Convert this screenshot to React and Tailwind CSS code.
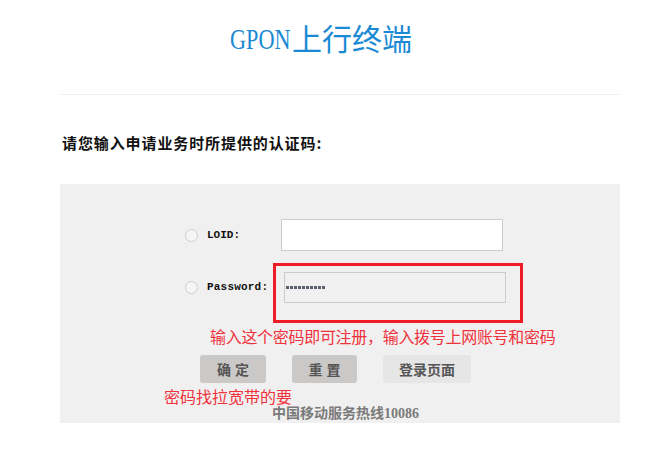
import React from "react";

const cjk = { fontFamily: '"Noto Sans CJK SC", "Noto Sans", sans-serif' };
const serifCjk = { fontFamily: '"Liberation Serif", "Noto Sans CJK SC", serif' };
const mono = { fontFamily: '"Liberation Mono", "Noto Sans CJK SC", monospace' };

function Radio() {
  return <div className="w-[13px] h-[13px] rounded-full border border-[#cfcfcf] bg-[#f5f5f5] shrink-0" />;
}

export default function App() {
  return (
    <div className="w-[672px] h-[449px] bg-white overflow-hidden">
      <div className="ml-[60px] w-[560px]">
        <div className="pt-[19px] pl-[170px] h-[55px] flex items-center text-[#1b8ad4] text-[30px] leading-[36px]" style={cjk}>
          <span className="inline-block w-[62px] overflow-visible">
            <span className="inline-block origin-left scale-x-[0.74] whitespace-nowrap" style={{ fontFamily: '"Liberation Serif", serif' }}>GPON</span>
          </span>
          <span>上行终端</span>
        </div>
        <div className="mt-[39px] h-px bg-[#efefef]" />
        <div className="mt-[38px] pl-[2px] text-[15px] leading-[20px] font-bold text-[#111] tracking-[0.9px]" style={cjk}>
          请您输入申请业务时所提供的认证码:
        </div>
        <div className="mt-[31px] h-[239px] bg-[#f0f0f0] pt-[35px]">
          <div className="flex items-center h-[32px] pl-[125px]">
            <Radio />
            <div className="ml-[9px] w-[74px] text-[11px] font-bold text-[#111]" style={mono}>LOID:</div>
            <div className="w-[222px] h-[32px] border border-[#cccccc] bg-white" />
          </div>
          <div className="mt-[12px] flex items-start pl-[125px]">
            <div className="mt-[9px] h-[31px] flex items-center">
              <Radio />
              <div className="ml-[9px] w-[66px] text-[11px] font-bold text-[#111] tracking-[0.2px]" style={mono}>Password:</div>
            </div>
            <div className="w-[250px] h-[60px] border-[3px] border-[#ee1c25] pt-[6px] pl-[8px]">
              <div className="w-[222px] h-[31px] border border-[#cccccc] bg-[#f0f0f0] flex items-center pl-[1px] gap-[1px]">
                {Array.from({ length: 10 }).map((_, i) => (
                  <div key={i} className="w-[3px] h-[3px] bg-[#5a6070]" />
                ))}
              </div>
            </div>
          </div>
          <div className="mt-[3px] pl-[150px] text-[16px] leading-[20px] text-[#f0323c] tracking-[-0.3px]" style={cjk}>
            输入这个密码即可注册，输入拨号上网账号和密码
          </div>
          <div className="mt-[9px] pl-[140px] flex gap-[26px]">
            <div className="w-[66px] h-[28px] rounded-[3px] bg-[#cbc9c7] flex items-center justify-center text-[14px] font-bold text-[#555] tracking-[4px] pl-[4px]" style={cjk}>确定</div>
            <div className="w-[65px] h-[28px] rounded-[3px] bg-[#cbc9c7] flex items-center justify-center text-[14px] font-bold text-[#555] tracking-[4px] pl-[4px]" style={cjk}>重置</div>
            <div className="w-[88px] h-[28px] rounded-[3px] bg-[#e6e6e6] flex items-center justify-center text-[14px] font-bold text-[#555]" style={cjk}>登录页面</div>
          </div>
          <div className="mt-[3px] pl-[104px] text-[16px] leading-[20px] text-[#f0323c]" style={cjk}>
            密码找拉宽带的要
          </div>
          <div className="pl-[212px] text-[14px] leading-[16px] font-bold text-[#7a7a7a]" style={serifCjk}>
            中国移动服务热线10086
          </div>
        </div>
      </div>
    </div>
  );
}
